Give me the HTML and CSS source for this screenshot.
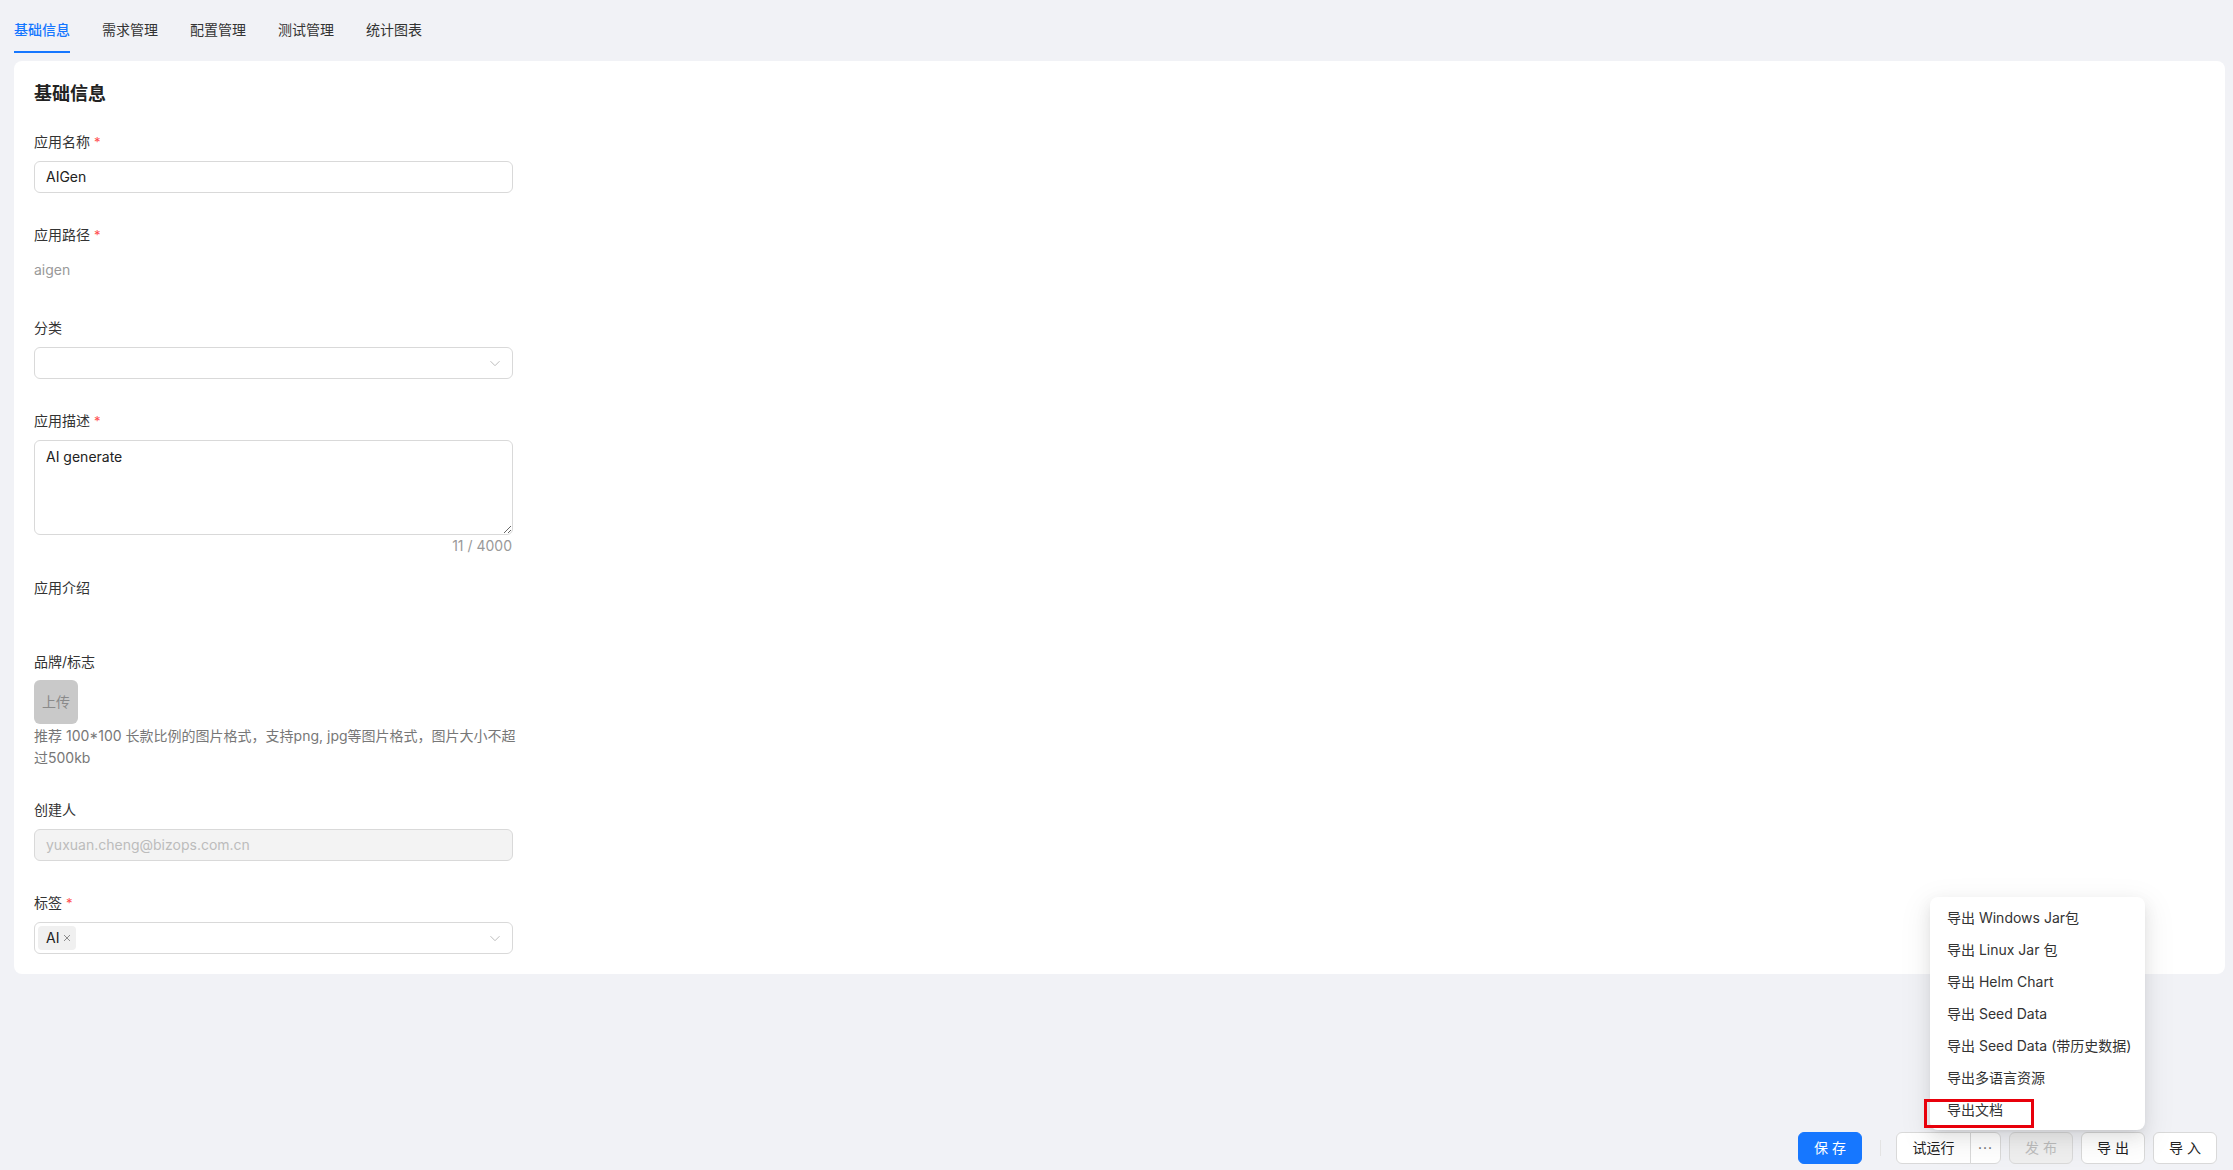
FILE: index.html
```html
<!DOCTYPE html>
<html lang="zh-CN">
<head>
<meta charset="utf-8">
<title>基础信息</title>
<link rel="stylesheet" href="styles.css">
</head>
<body>
<div class="page">
  <nav class="tabs">
    <a class="tab active">基础信息</a>
    <a class="tab">需求管理</a>
    <a class="tab">配置管理</a>
    <a class="tab">测试管理</a>
    <a class="tab">统计图表</a>
  </nav>

  <main class="card">
    <h2 class="card-title">基础信息</h2>
    <div class="form">
      <div class="item">
        <label class="label">应用名称<span class="req">*</span></label>
        <div class="input">AIGen</div>
      </div>

      <div class="item">
        <label class="label">应用路径<span class="req">*</span></label>
        <div class="plain">aigen</div>
      </div>

      <div class="item">
        <label class="label">分类</label>
        <div class="input select">
          <span class="select-value"></span>
          <svg class="chev" width="12" height="12" viewBox="0 0 12 12"><path d="M1.5 4.2 6 8.7l4.5-4.5" fill="none" stroke="#bdbdbd" stroke-width="1"/></svg>
        </div>
      </div>

      <div class="item item-count">
        <label class="label">应用描述<span class="req">*</span></label>
        <textarea class="textarea" readonly>AI generate</textarea>
        <div class="count">11 / 4000</div>
      </div>

      <div class="item">
        <label class="label">应用介绍</label>
        <div class="empty"></div>
      </div>

      <div class="item item-brand">
        <label class="label">品牌/标志</label>
        <div class="upload">上传</div>
        <p class="hint">推荐 100*100 长款比例的图片格式，支持png, jpg等图片格式，图片大小不超过500kb</p>
      </div>

      <div class="item">
        <label class="label">创建人</label>
        <div class="input disabled">yuxuan.cheng@bizops.com.cn</div>
      </div>

      <div class="item item-last">
        <label class="label">标签<span class="req">*</span></label>
        <div class="input select tags">
          <span class="tag">AI<svg class="tag-x" width="10" height="10" viewBox="0 0 10 10"><path d="M2 2l6 6M8 2 2 8" stroke="#8c8c8c" stroke-width="1"/></svg></span>
          <svg class="chev" width="12" height="12" viewBox="0 0 12 12"><path d="M1.5 4.2 6 8.7l4.5-4.5" fill="none" stroke="#bdbdbd" stroke-width="1"/></svg>
        </div>
      </div>
    </div>
  </main>

  <footer class="actions">
    <button class="btn primary">保 存</button>
    <span class="vsep"></span>
    <div class="btn-group">
      <button class="btn grp-main">试运行</button>
      <button class="btn grp-more">···</button>
    </div>
    <button class="btn disabled-btn">发 布</button>
    <button class="btn">导 出</button>
    <button class="btn">导 入</button>

    <div class="menu">
      <div class="menu-item">导出 Windows Jar包</div>
      <div class="menu-item">导出 Linux Jar 包</div>
      <div class="menu-item">导出 Helm Chart</div>
      <div class="menu-item">导出 Seed Data</div>
      <div class="menu-item">导出 Seed Data (带历史数据)</div>
      <div class="menu-item">导出多语言资源</div>
      <div class="menu-item marked">导出文档<span class="mark"></span></div>
    </div>
  </footer>
</div>
</body>
</html>
```

FILE: styles.css
```css
* { box-sizing: border-box; }

html, body { margin: 0; padding: 0; }

body {
  font-family: Inter, "Noto Sans CJK SC", "Noto Sans", sans-serif;
  font-size: 14px;
  line-height: 22px;
  color: #333;
  background: #f1f2f6;
}

.page {
  min-height: 100vh;
  display: flex;
  flex-direction: column;
}

/* tabs */
.tabs {
  display: flex;
  gap: 32px;
  padding-left: 14px;
}

.tab {
  padding: 19px 0 10px;
  border-bottom: 2px solid transparent;
  color: #333;
  cursor: pointer;
}

.tab.active {
  color: #1677ff;
  border-bottom-color: #1677ff;
  font-weight: 500;
}

/* card */
.card {
  margin: 8px 8px 0 14px;
  background: #fff;
  border-radius: 8px;
  padding: 20px 20px 20px;
}

.card-title {
  margin: 0 0 24px;
  font-size: 18px;
  line-height: 26px;
  font-weight: 600;
  color: #222;
}

.form { width: 479px; }

.item { margin-bottom: 31px; }
.item-count { margin-bottom: 20px; }
.item-brand { margin-bottom: 30px; }
.item-last { margin-bottom: 0; }

.label {
  display: block;
  margin-bottom: 8px;
  color: #333;
}

.req {
  color: #ff4d4f;
  margin-left: 4px;
  font-size: 13px;
}

.input {
  height: 32px;
  border: 1px solid #d9d9d9;
  border-radius: 6px;
  padding: 0 11px;
  line-height: 30px;
  color: #222;
  background: #fff;
}

.select {
  display: flex;
  align-items: center;
  justify-content: space-between;
}

.chev { flex: none; }

.disabled {
  background: #f3f3f3;
  color: #bcbcbc;
}

.plain {
  height: 32px;
  line-height: 32px;
  color: #999;
}

.textarea {
  display: block;
  width: 100%;
  height: 95px;
  border: 1px solid #d9d9d9;
  border-radius: 6px;
  padding: 5px 11px;
  font: inherit;
  line-height: 22px;
  color: #222;
  outline: none;
  resize: vertical;
}

.count {
  text-align: right;
  color: #999;
  padding-right: 1px;
}

.empty { height: 13px; }

.upload {
  width: 44px;
  height: 44px;
  border-radius: 6px;
  background: #c9c9c9;
  color: #8a8a8a;
  display: flex;
  align-items: center;
  justify-content: center;
  margin-top: -1px;
}

.hint {
  margin: 1px -12px 0 0;
  color: #777;
}

.tags { padding-left: 3px; }

.tag {
  display: inline-flex;
  align-items: center;
  gap: 3px;
  height: 24px;
  padding: 0 4px 0 8px;
  background: #f0f0f0;
  border-radius: 4px;
  line-height: 24px;
  color: #222;
}

/* footer actions */
.actions {
  position: relative;
  margin-top: auto;
  display: flex;
  justify-content: flex-end;
  align-items: center;
  gap: 8px;
  padding: 0 16px 6px;
}

.btn {
  height: 32px;
  min-width: 64px;
  padding: 0 15px;
  border: 1px solid #d9d9d9;
  border-radius: 6px;
  background: #fff;
  font: inherit;
  color: #222;
  cursor: pointer;
}

.primary {
  background: #1677ff;
  border-color: #1677ff;
  color: #fff;
}

.vsep {
  width: 1px;
  height: 16px;
  background: #e3e3e3;
  margin: 0 7px 0 10px;
}

.btn-group { display: flex; }

.grp-main {
  min-width: 0;
  width: 75px;
  padding: 0;
  border-radius: 6px 0 0 6px;
}

.grp-more {
  min-width: 0;
  width: 31px;
  padding: 0;
  margin-left: -1px;
  border-radius: 0 6px 6px 0;
  color: #666;
  letter-spacing: 1px;
}

.disabled-btn {
  background: #efefef;
  color: #bdbdbd;
  cursor: not-allowed;
}

/* dropdown menu */
.menu {
  position: absolute;
  right: 88px;
  bottom: calc(100% + 2px);
  width: 215px;
  padding: 5px 0 4px;
  background: #fff;
  border-radius: 8px;
  box-shadow: 0 6px 16px 0 rgba(0,0,0,.08), 0 3px 6px -4px rgba(0,0,0,.12), 0 9px 28px 8px rgba(0,0,0,.05);
}

.menu-item {
  height: 32px;
  line-height: 32px;
  padding: 0 17px;
  white-space: nowrap;
  color: #333;
}

.marked { position: relative; }

.mark {
  position: absolute;
  left: -6px;
  top: 5px;
  width: 110px;
  height: 29px;
  border: 3px solid #e8000b;
  pointer-events: none;
}
```
